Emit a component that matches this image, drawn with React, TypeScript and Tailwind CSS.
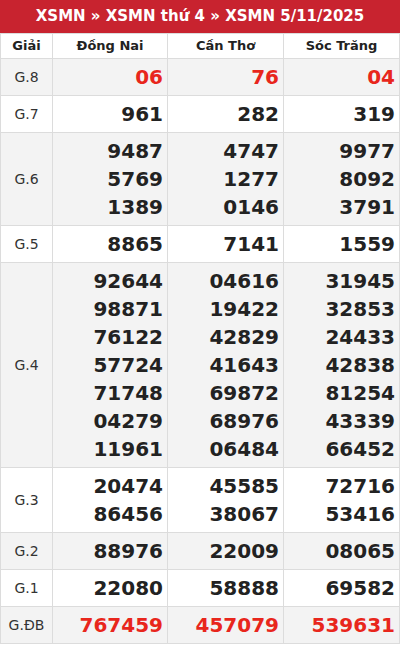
import React from 'react';

type Row = { label: string; values: string[][]; red?: boolean };

const rows: Row[] = [
    { label: 'G.8', values: [['06'], ['76'], ['04']], red: true },
    { label: 'G.7', values: [['961'], ['282'], ['319']] },
    { label: 'G.6', values: [['9487', '5769', '1389'], ['4747', '1277', '0146'], ['9977', '8092', '3791']] },
    { label: 'G.5', values: [['8865'], ['7141'], ['1559']] },
    {
        label: 'G.4',
        values: [
            ['92644', '98871', '76122', '57724', '71748', '04279', '11961'],
            ['04616', '19422', '42829', '41643', '69872', '68976', '06484'],
            ['31945', '32853', '24433', '42838', '81254', '43339', '66452'],
        ],
    },
    { label: 'G.3', values: [['20474', '86456'], ['45585', '38067'], ['72716', '53416']] },
    { label: 'G.2', values: [['88976'], ['22009'], ['08065']] },
    { label: 'G.1', values: [['22080'], ['58888'], ['69582']] },
    { label: 'G.ĐB', values: [['767459'], ['457079'], ['539631']], red: true },
];

const provinces = ['Đồng Nai', 'Cần Thơ', 'Sóc Trăng'];

export default function App() {
    return (
        <div className="w-[400px] bg-white" style={{ fontFamily: '"DejaVu Sans", sans-serif' }}>
            <div className="h-[33px] bg-[#c8232f] text-white font-bold text-[15px] flex items-center justify-center">
                XSMN » XSMN thứ 4 » XSMN 5/11/2025
            </div>
            <table className="w-[400px] border-collapse table-fixed border border-[#dcdcdc]">
                <colgroup>
                    <col className="w-[52px]" />
                    <col className="w-[115px]" />
                    <col className="w-[116px]" />
                    <col className="w-[116px]" />
                </colgroup>
                <thead>
                    <tr className="h-[25px]">
                        <th className="border border-[#dcdcdc] text-[13px] font-bold text-[#222] p-0 leading-[20px]">Giải</th>
                        {provinces.map(p => (
                            <th key={p} className="border border-[#dcdcdc] text-[13px] font-bold text-[#222] p-0 leading-[20px]">{p}</th>
                        ))}
                    </tr>
                </thead>
                <tbody>
                    {rows.map((r, i) => (
                        <tr key={r.label} className={i % 2 === 0 ? 'bg-[#f3f3f3]' : 'bg-white'}>
                            <td className="border border-[#dcdcdc] text-center text-[14px] text-[#333] p-0">{r.label}</td>
                            {r.values.map((col, j) => (
                                <td
                                    key={j}
                                    className={`border border-[#dcdcdc] text-right pr-[4px] py-[4px] text-[20px] font-bold leading-[28px] ${
                                        r.red ? 'text-[#e8261c]' : 'text-[#222]'
                                    }`}
                                >
                                    {col.map(n => (
                                        <div key={n}>{n}</div>
                                    ))}
                                </td>
                            ))}
                        </tr>
                    ))}
                </tbody>
            </table>
        </div>
    );
}
